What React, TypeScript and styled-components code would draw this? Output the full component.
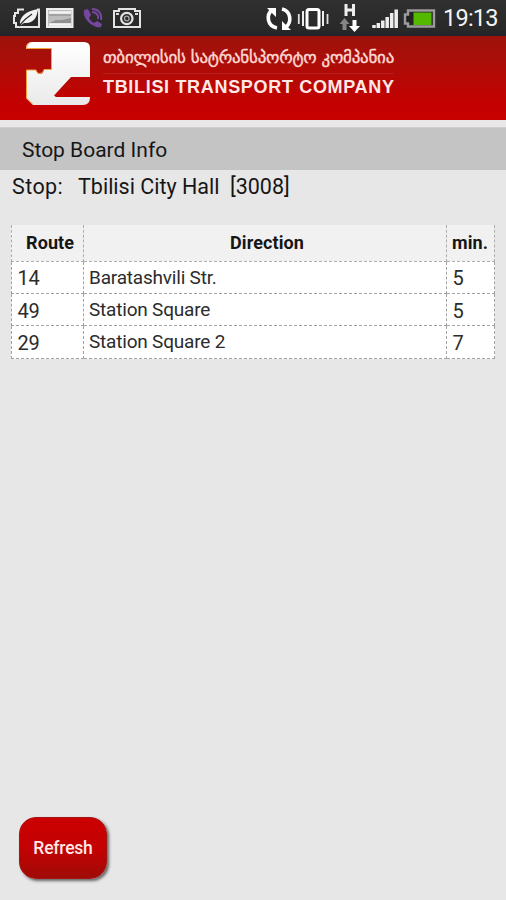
import React from "react";
import styled, { createGlobalStyle } from "styled-components";

const GlobalStyle = createGlobalStyle`
  * { box-sizing: border-box; }
  body { margin: 0; background: #e7e7e7; }
`;

const Screen = styled.main`
  width: 506px;
  height: 900px;
  display: flex;
  flex-direction: column;
  overflow: hidden;
  background: #e7e7e7;
  color: #161616;
  font-family: Roboto, sans-serif;
`;

const StatusBar = styled.div`
  height: 36px;
  flex: none;
  display: flex;
  align-items: flex-start;
  justify-content: space-between;
  background: linear-gradient(#303030, #282828 85%, #20242a);
  padding: 0 7px 0 12px;
`;

const IconGroup = styled.div`
  display: flex;
  align-items: flex-start;
  height: 36px;
  svg { display: block; flex: none; }
`;

const Clock = styled.span`
  width: 56px;
  margin-left: 6px;
  color: #f4f4f4;
  font-size: 23.5px;
  line-height: 37px;
  letter-spacing: -0.75px;
  white-space: nowrap;
`;

const Header = styled.header`
  height: 84px;
  flex: none;
  display: flex;
  padding: 5px 0 0 25px;
  background: linear-gradient(#9d120b, #ab0e09 30%, #c20201 75%, #c80000);
`;

const BrandText = styled.div`
  width: 291px;
  margin-left: 12px;
  display: flex;
  flex-direction: column;
`;

const GeorgianName = styled.span`
  height: 33px;
  line-height: 32px;
  border-bottom: 1px solid #b5201a;
  font-family: "DejaVu Sans", sans-serif;
  font-size: 17px;
  letter-spacing: -0.25px;
  white-space: nowrap;
  color: #ffd9d3;
  -webkit-text-stroke: 0.4px #ffd9d3;
`;

const EnglishName = styled.span`
  line-height: 26px;
  font-family: "Liberation Sans", Arial, sans-serif;
  font-weight: 700;
  font-size: 18px;
  letter-spacing: 0.68px;
  white-space: nowrap;
  color: #ffe9e7;
`;

const PageTitle = styled.h1`
  height: 50px;
  flex: none;
  margin: 0;
  padding: 1px 0 0 22px;
  border-top: 7px solid #e9e7e7;
  box-shadow: inset 0 1px #cfcfcf;
  background: #c4c4c4;
  font-size: 21px;
  font-weight: 400;
  line-height: 44px;
  letter-spacing: 0;
`;

const StopLine = styled.div`
  height: 55px;
  flex: none;
  display: flex;
  padding-left: 12px;
  font-size: 21.5px;
  line-height: 33px;
  white-space: nowrap;
`;

const StopLabel = styled.span`
  width: 66px;
  letter-spacing: 0.4px;
`;

const StopName = styled.span`
  width: 152px;
`;

const Board = styled.table`
  width: 484px;
  margin-left: 11px;
  flex: none;
  table-layout: fixed;
  border-collapse: collapse;
  background: #fff;
`;

const HeadCell = styled.th<{ $w: number; $left?: number }>`
  width: ${(p) => p.$w}px;
  height: 36px;
  padding: 0 0 0 ${(p) => p.$left ?? 4}px;
  border: 1px dashed #adadad;
  border-top: 0;
  background: #f1f1f1;
  font-size: 18px;
  font-weight: 700;
  line-height: 34px;
  letter-spacing: 0.1px;
  text-align: ${(p) => (p.$left ? "left" : "center")};
`;

const Cell = styled.td<{ $raised?: boolean }>`
  height: 32.4px;
  padding: ${(p) => (p.$raised ? "0 0 0 5px" : "2px 0 0 5.500px")};
  border: 1px dashed #a3a3a3;
  color: #2c2c2c;
  font-size: ${(p) => (p.$raised ? 19 : 20)}px;
  line-height: ${(p) => (p.$raised ? 29 : 28)}px;
  letter-spacing: ${(p) => (p.$raised ? -0.2 : -0.2)}px;
`;

const RefreshButton = styled.button`
  width: 88px;
  height: 62px;
  flex: none;
  margin: auto 0 21px 19px;
  padding: 0;
  border: 1px solid #a51512;
  border-radius: 17px;
  background: linear-gradient(#cb0000, #c30202 50%, #9f0b08);
  box-shadow: 2px 2px 3px #666;
  color: #ffe7e5;
  font-family: Roboto, sans-serif;
  font-size: 17.5px;
  font-weight: 500;
  letter-spacing: -0.2px;
`;

const BatterySaverIcon = () => (
  <svg width="32" height="36" viewBox="11 0 32 36">
    <path d="M23 9.500H17V13H14v3h-1v7h2v4h23V9.500h-2" fill="none" stroke="#e4e4e4" strokeWidth="2" />
    <path d="M19 25c-1-8 6-14 18-16-1 9-5 15-14 14l-3 2z" fill="#f2f2f2" />
    <path d="M18 26c4-5 7-8 13-12" fill="none" stroke="#2b2b2b" strokeWidth="1.3" />
  </svg>
);

const NewsIcon = () => (
  <svg width="32" height="36" viewBox="44 0 32 36">
    <rect x="47" y="9" width="25.500" height="18" fill="#bdbdbd" stroke="#eee" strokeWidth="2" />
    <path d="M49 12.500h22M49 24.500h22" stroke="#f4f4f4" strokeWidth="2.500" />
    <path d="M49 15h22" stroke="#888" strokeWidth="1" />
    <path d="M49 23l7-3h6l9-2v5z" fill="#919191" />
  </svg>
);

const CallIcon = () => (
  <svg width="34" height="36" viewBox="76 0 34 36">
    <path d="M84 10l4-1 3 6-2 3c1 2 3 4 5 5l3-2 5 3-1 3c-6 2-19-7-17-17z" fill="#77479f" />
    <path d="M92 9c6 0 10 4 9 11M92 12c4 0 7 3 6 7" fill="none" stroke="#77479f" strokeWidth="2" />
  </svg>
);

const CameraIcon = () => (
  <svg width="34" height="36" viewBox="110 0 34 36">
    <path d="M114 11h5V9h16v2h5v16h-26z" fill="none" stroke="#e4e4e4" strokeWidth="2" />
    <circle cx="126.800" cy="18.500" r="5.700" fill="none" stroke="#e4e4e4" strokeWidth="2.200" />
    <circle cx="126.800" cy="18.500" r="2.300" fill="none" stroke="#aaa" strokeWidth="1.300" />
    <path d="M116 14h3M135 14h3" stroke="#ddd" strokeWidth="2" />
  </svg>
);

const SyncIcon = () => (
  <svg width="30" height="36" viewBox="264 0 30 36">
    <path d="M276 28c-10-2-11-13-5-18M281 9c9 2 10 13 4 18" fill="none" stroke="#fff" strokeWidth="3.600" />
    <path d="M266 8h9v9zM290 30h-9v-9z" fill="#fff" />
  </svg>
);

const VibrateIcon = () => (
  <svg width="38" height="36" viewBox="294 0 38 36">
    <rect x="306" y="9.500" width="12" height="18.500" rx="2" fill="none" stroke="#fff" strokeWidth="3" />
    <path d="M302 11v15M322 11v15" stroke="#eee" strokeWidth="2" />
    <path d="M297.800 14v10M326.500 14v10" stroke="#ddd" strokeWidth="1.800" />
  </svg>
);

const DataIcon = () => (
  <svg width="36" height="36" viewBox="332 0 36 36">
    <path d="M345 4v12M352.500 4v12M345 10h7" stroke="#eee" strokeWidth="3" fill="none" />
    <path d="M343.500 18l5 6h-3v6h-4v-6h-3z" fill="#858585" />
    <path d="M351.500 20h4v6h3.500l-5.500 6-5.500-6h3.500z" fill="#fff" />
  </svg>
);

const SignalIcon = () => (
  <svg width="32" height="36" viewBox="368 0 32 36">
    <path
      d="M373 25v3M377.300 23v5M381.800 20.500v7.500M386.200 17v11M390.700 13v15M395.200 9.500V28"
      stroke="#eee"
      strokeWidth="3.500"
    />
  </svg>
);

const BatteryIcon = () => (
  <svg width="36" height="36" viewBox="401 0 36 36">
    <path d="M408 10.500h26v16h-26v-3h-3v-9h3z" fill="#222" stroke="#9b9b9b" strokeWidth="2.400" />
    <path d="M413.500 12.500H431.500v12.500H413.500z" fill="#55b800" />
  </svg>
);

const CompanyLogo = () => (
  <svg width="66" height="66" viewBox="25 41 66 66">
    <defs>
      <linearGradient id="logoFill" x2="0" y2="1">
        <stop offset="0" stopColor="#fff" />
        <stop offset="1" stopColor="#eaeaea" />
      </linearGradient>
    </defs>
    <path
      d="M32 42H84Q90 42 90 48V77H71L54 95.500L56 97H90Q90 105 83 105H33L26 98V70H36Q37 74 40 74T44 70H51V49H26Q26 42 32 42Z"
      fill="url(#logoFill)"
    />
    <path
      d="M30 42.500Q26.500 43.500 26.500 48.500H51.500V69.500H44Q43 73 40 73.500T36 70H26.500V98L33 104.500"
      fill="none"
      stroke="#efa33b"
      strokeWidth="1"
    />
  </svg>
);

const arrivals = [
  { route: "14", direction: "Baratashvili Str.", minutes: 5 },
  { route: "49", direction: "Station Square", minutes: 5 },
  { route: "29", direction: "Station Square 2", minutes: 7 },
];

export default function App() {
  return (
    <>
      <GlobalStyle />
      <Screen>
        <StatusBar>
          <IconGroup>
            <BatterySaverIcon />
            <NewsIcon />
            <CallIcon />
            <CameraIcon />
          </IconGroup>
          <IconGroup>
            <SyncIcon />
            <VibrateIcon />
            <DataIcon />
            <SignalIcon />
            <BatteryIcon />
            <Clock>19:13</Clock>
          </IconGroup>
        </StatusBar>
        <Header>
          <CompanyLogo />
          <BrandText>
            <GeorgianName>თბილისის სატრანსპორტო კომპანია</GeorgianName>
            <EnglishName>TBILISI TRANSPORT COMPANY</EnglishName>
          </BrandText>
        </Header>
        <PageTitle>Stop Board Info</PageTitle>
        <StopLine>
          <StopLabel>Stop:</StopLabel>
          <StopName>Tbilisi City Hall</StopName>
          <span>[3008]</span>
        </StopLine>
        <Board>
          <thead>
            <tr>
              <HeadCell $w={72} $left={14}>Route</HeadCell>
              <HeadCell $w={363}>Direction</HeadCell>
              <HeadCell $w={48} $left={5}>min.</HeadCell>
            </tr>
          </thead>
          <tbody>
            {arrivals.map((a) => (
              <tr key={a.route}>
                <Cell>{a.route}</Cell>
                <Cell $raised>{a.direction}</Cell>
                <Cell>{a.minutes}</Cell>
              </tr>
            ))}
          </tbody>
        </Board>
        <RefreshButton>Refresh</RefreshButton>
      </Screen>
    </>
  );
}
